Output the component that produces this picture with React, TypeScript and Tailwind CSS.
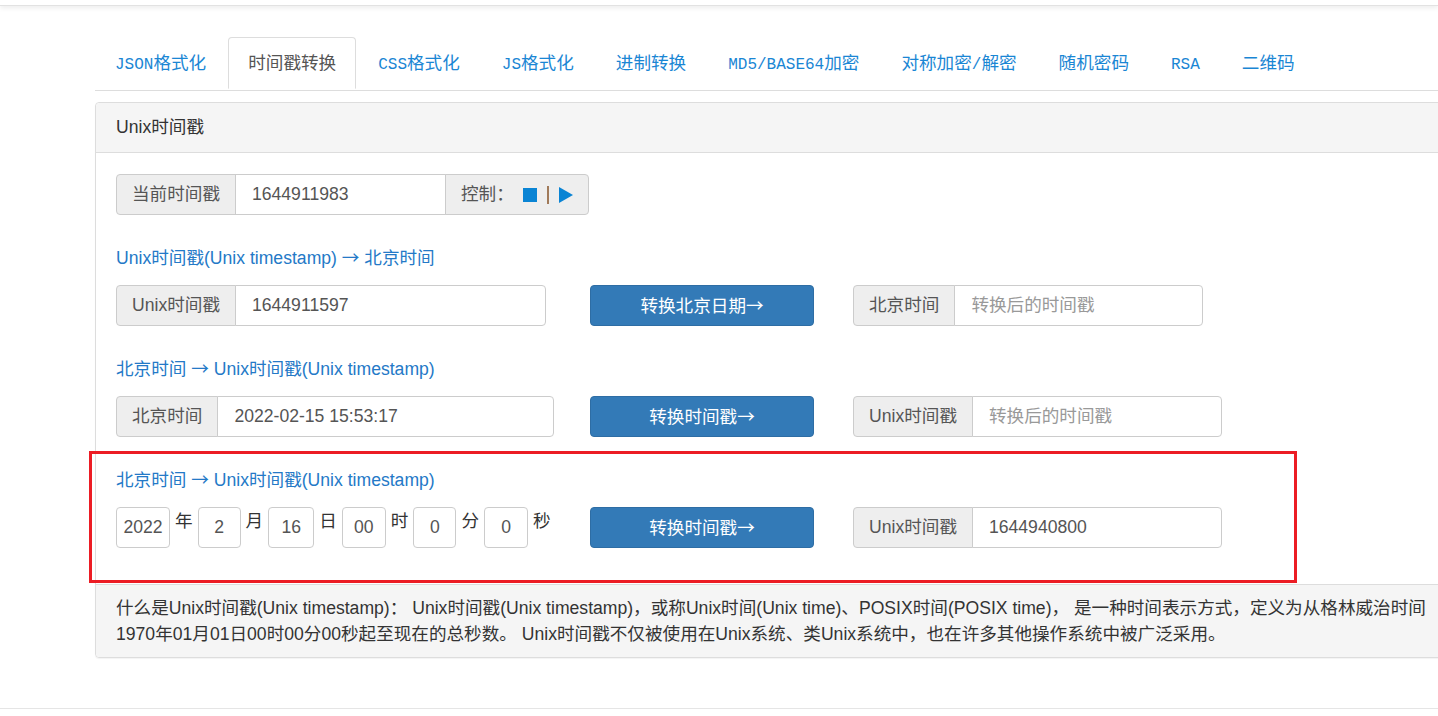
import React from 'react'

const tabs = [
  { label: 'JSON', suffix: '格式化' },
  { label: '', suffix: '时间戳转换', active: true },
  { label: 'CSS', suffix: '格式化' },
  { label: 'JS', suffix: '格式化' },
  { label: '', suffix: '进制转换' },
  { label: 'MD5/BASE64', suffix: '加密' },
  { label: '', suffix: '对称加密', slash: '解密' },
  { label: '', suffix: '随机密码' },
  { label: 'RSA', suffix: '' },
  { label: '', suffix: '二维码' },
]

const mono = { fontFamily: '"Liberation Mono", monospace' }
const cjk = { fontFamily: '"Noto Sans CJK SC", sans-serif' }

function Arrow() {
  return <span style={cjk}>→</span>
}

function Addon({ children, last }: { children: React.ReactNode; last?: boolean }) {
  return (
    <span
      className={
        'flex items-center px-[15px] bg-[#eeeeee] border border-[#cccccc] text-[#555] whitespace-nowrap ' +
        (last ? 'rounded-r-[4px] -ml-px' : 'rounded-l-[4px]')
      }
    >
      {children}
    </span>
  )
}

function Field({ value, placeholder, width, last }: { value?: string; placeholder?: string; width: string; last?: boolean }) {
  return (
    <input
      readOnly
      value={value ?? ''}
      placeholder={placeholder}
      className={
        'h-full px-[16px] border border-[#cccccc] -ml-px bg-white text-[#555] placeholder:text-[#999] outline-none ' +
        width +
        (last ? ' rounded-r-[4px]' : '')
      }
    />
  )
}

function ConvertButton({ text }: { text: string }) {
  return (
    <button className="w-[224px] h-[41px] rounded-[4px] bg-[#337ab7] border border-[#2e6da4] text-white">
      {text}
      <Arrow />
    </button>
  )
}

function Small({ value, width }: { value: string; width: string }) {
  return (
    <input
      readOnly
      value={value}
      className={'h-full text-center border border-[#cccccc] rounded-[4px] text-[#555] outline-none ' + width}
    />
  )
}

function Unit({ children }: { children: React.ReactNode }) {
  return <span className="self-start pt-[1px] px-[5px] leading-[26px] text-[#333]">{children}</span>
}

export default function App() {
  return (
    <div
      className="relative w-full h-[716px] overflow-hidden bg-white text-[17.6px]"
      style={{ fontFamily: '"Liberation Sans", "Noto Sans CJK SC", sans-serif' }}
    >
      {/* header shadow */}
      <div className="h-[6px] border-b border-[#e2e2e2] shadow-[0_2px_5px_rgba(0,0,0,0.08)]" />

      <div className="pl-[95px] pt-[31px]">
        {/* Tabs */}
        <ul className="flex w-[1400px] border-b border-[#dddddd]">
          {tabs.map((t, i) => (
            <li key={i} className="-mb-px mr-[2px]">
              <a
                className={
                  'block px-[19px] py-[12px] leading-[26px] border rounded-t-[4px] whitespace-nowrap ' +
                  (t.active
                    ? 'bg-white border-[#dddddd] border-b-transparent text-[#555]'
                    : 'border-transparent text-[#1a86d4]')
                }
              >
                {t.label && (
                  <span className="text-[16px]" style={mono}>
                    {t.label}
                  </span>
                )}
                {t.suffix}
                {t.slash && (
                  <>
                    <span className="text-[16px]" style={mono}>/</span>
                    {t.slash}
                  </>
                )}
              </a>
            </li>
          ))}
        </ul>

        {/* Panel */}
        <div className="mt-[11px] w-[1400px] border border-[#dddddd] rounded-[4px] shadow-[0_1px_1px_rgba(0,0,0,0.05)]">
          <div className="h-[50px] flex items-center px-[20px] bg-[#f5f5f5] border-b border-[#dddddd] text-[#333] rounded-t-[4px]">
            Unix时间戳
          </div>

          <div className="px-[20px] pt-[21px] pb-[36px]">
            {/* current timestamp */}
            <div className="flex h-[41px]">
              <Addon>当前时间戳</Addon>
              <Field value="1644911983" width="w-[211px]" />
              <Addon last>
                控制：
                <span className="ml-[9px] w-[14px] h-[14px] bg-[#0a84d4]" />
                <span className="mx-[10px] w-[2px] h-[18px] bg-[#a07a5a]" />
                <svg width="14" height="16" viewBox="0 0 14 16">
                  <path d="M0 0 L14 8 L0 16 Z" fill="#0a84d4" />
                </svg>
              </Addon>
            </div>

            {/* unix -> beijing */}
            <div className="mt-[29px] mb-[14px] leading-[26px] text-[#2479c7]">
              Unix时间戳(Unix timestamp) <Arrow /> 北京时间
            </div>
            <div className="flex h-[41px]">
              <div className="w-[474px] flex h-full">
                <Addon>Unix时间戳</Addon>
                <Field value="1644911597" width="w-[311px]" last />
              </div>
              <ConvertButton text="转换北京日期" />
              <div className="ml-[39px] flex h-full">
                <Addon>北京时间</Addon>
                <Field placeholder="转换后的时间戳" width="w-[249px]" last />
              </div>
            </div>

            {/* beijing -> unix */}
            <div className="mt-[29px] mb-[14px] leading-[26px] text-[#2479c7]">
              北京时间 <Arrow /> Unix时间戳(Unix timestamp)
            </div>
            <div className="flex h-[41px]">
              <div className="w-[474px] flex h-full">
                <Addon>北京时间</Addon>
                <Field value="2022-02-15 15:53:17" width="w-[337px]" last />
              </div>
              <ConvertButton text="转换时间戳" />
              <div className="ml-[39px] flex h-full">
                <Addon>Unix时间戳</Addon>
                <Field placeholder="转换后的时间戳" width="w-[250px]" last />
              </div>
            </div>

            {/* date parts -> unix */}
            <div className="mt-[29px] mb-[14px] leading-[26px] text-[#2479c7]">
              北京时间 <Arrow /> Unix时间戳(Unix timestamp)
            </div>
            <div className="flex h-[41px]">
              <div className="w-[474px] flex h-full">
                <Small value="2022" width="w-[54px]" />
                <Unit>年</Unit>
                <Small value="2" width="w-[43px]" />
                <Unit>月</Unit>
                <Small value="16" width="w-[46px]" />
                <Unit>日</Unit>
                <Small value="00" width="w-[44px]" />
                <Unit>时</Unit>
                <Small value="0" width="w-[43px]" />
                <Unit>分</Unit>
                <Small value="0" width="w-[44px]" />
                <Unit>秒</Unit>
              </div>
              <ConvertButton text="转换时间戳" />
              <div className="ml-[39px] flex h-full">
                <Addon>Unix时间戳</Addon>
                <Field value="1644940800" width="w-[250px]" last />
              </div>
            </div>
          </div>

          <div className="px-[20px] py-[10px] leading-[26px] bg-[#f5f5f5] border-t border-[#dddddd] text-[#333] rounded-b-[4px] whitespace-nowrap">
            什么是Unix时间戳(Unix timestamp)： Unix时间戳(Unix timestamp)，或称Unix时间(Unix time)、POSIX时间(POSIX time)， 是一种时间表示方式，定义为从格林威治时间
            <br />
            1970年01月01日00时00分00秒起至现在的总秒数。 Unix时间戳不仅被使用在Unix系统、类Unix系统中，也在许多其他操作系统中被广泛采用。
          </div>
        </div>
      </div>

      <div className="mt-[50px] border-t border-[#e5e5e5]" />

      {/* annotation box */}
      <div className="absolute left-[89px] top-[451px] w-[1208px] h-[132px] border-[3px] border-[#ec1c24] pointer-events-none" />
    </div>
  )
}
